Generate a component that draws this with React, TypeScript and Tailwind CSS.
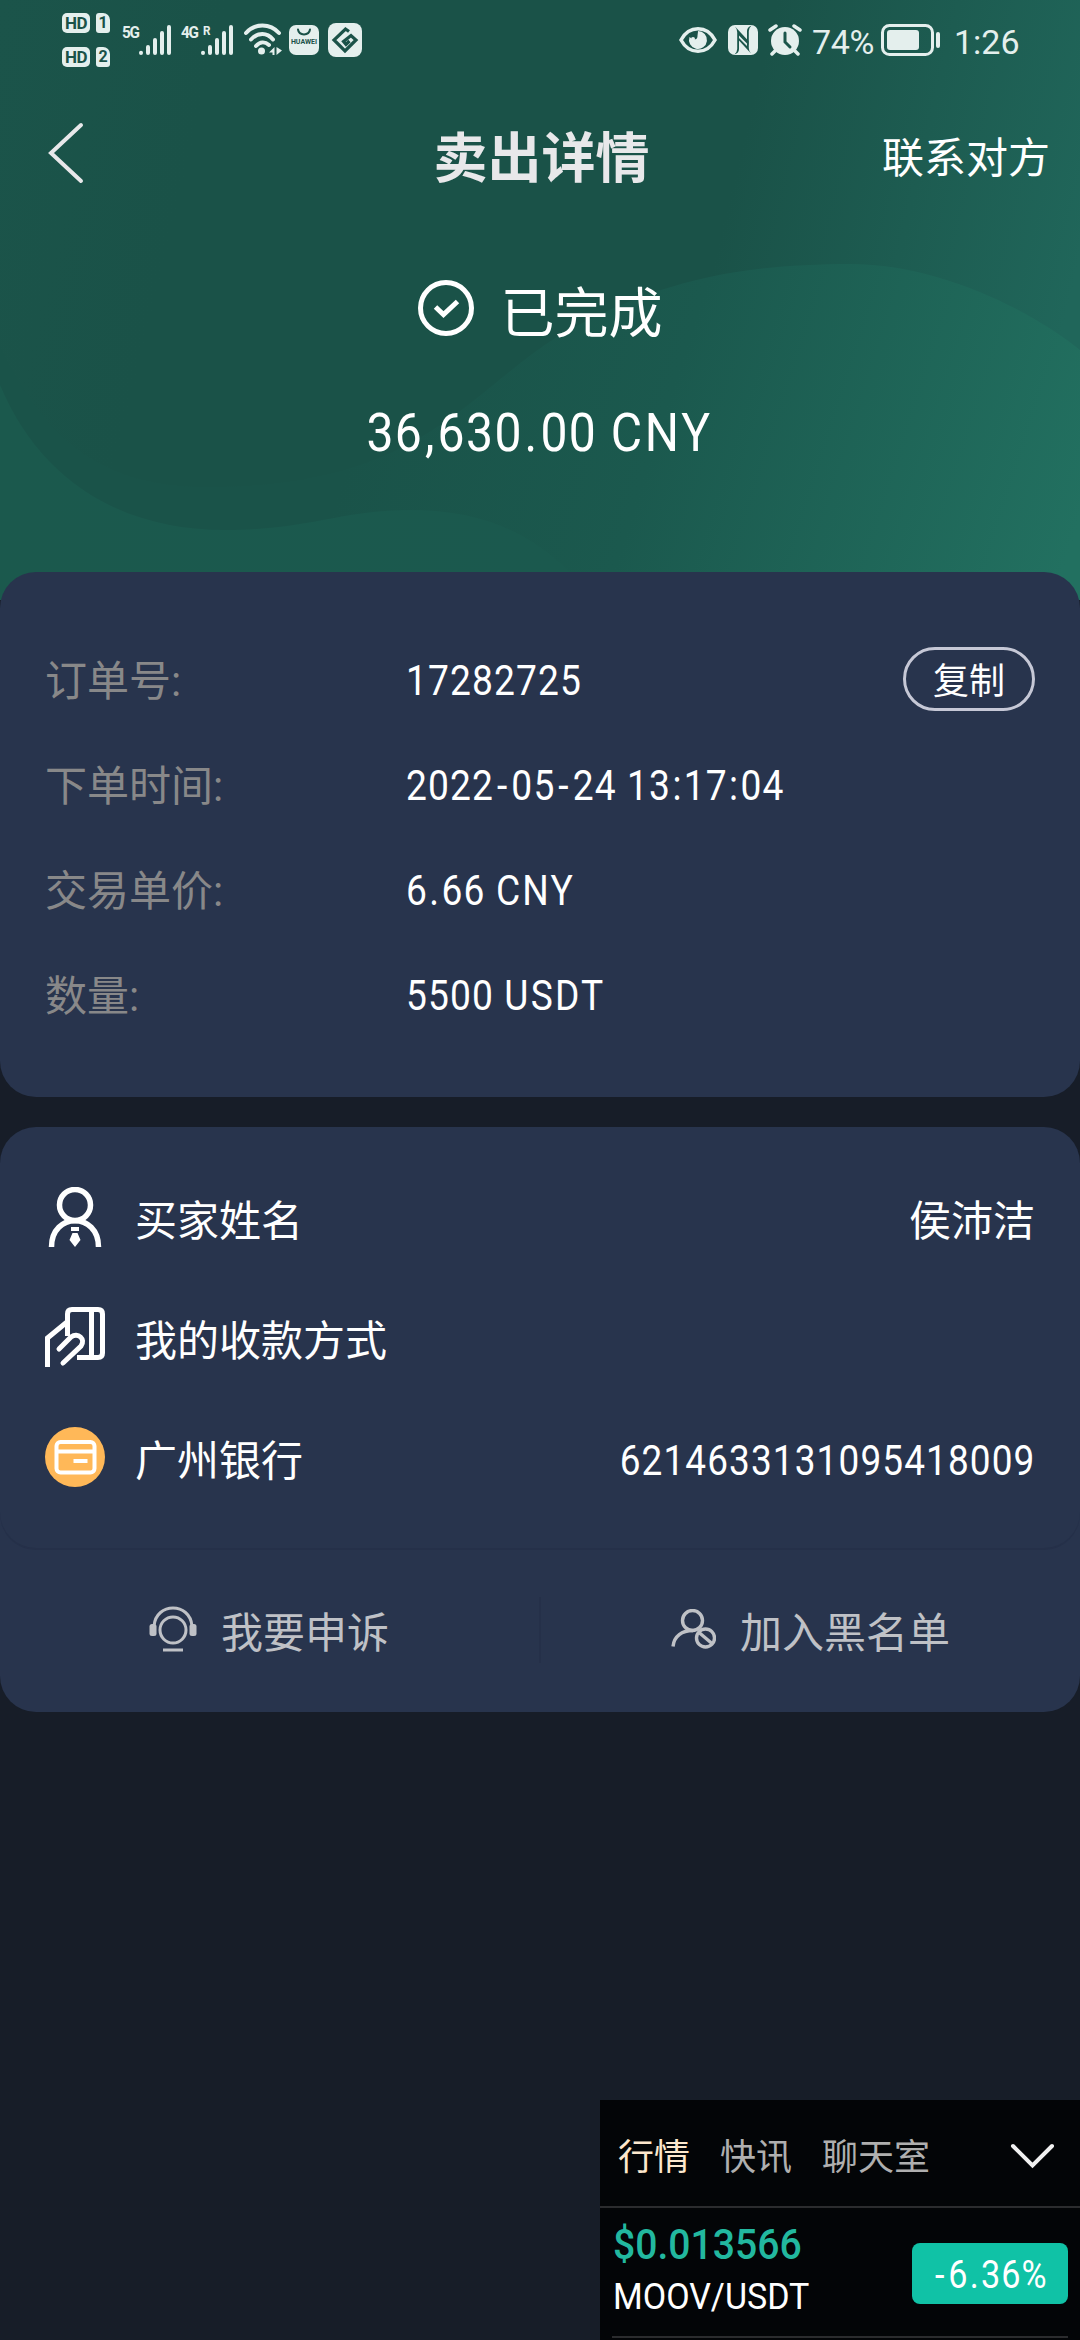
import type { ReactNode } from "react";

const orderRows = [
  { label: "订单号:", value: "17282725", copy: true },
  { label: "下单时间:", value: "2022-05-24 13:17:04" },
  { label: "交易单价:", value: "6.66 CNY" },
  { label: "数量:", value: "5500 USDT" },
];

// condensed numerals with roomier punctuation
const Num = ({ children }: { children: string }) => (
  <span className="inline-block whitespace-nowrap tracking-[0.03em]">
    {children.split(/([-:.,]|[A-Z]+)/).map((part, i) =>
      part === "-" ? (
        <span key={i} className="px-[0.08em]">{part}</span>
      ) : /^[:.,]$/.test(part) ? (
        <span key={i} className="px-[0.035em]">{part}</span>
      ) : /^[A-Z]+$/.test(part) ? (
        <span key={i} className="tracking-[0.06em]">{part}</span>
      ) : (
        part
      )
    )}
  </span>
);

const HeaderWaves = () => (
  <svg className="absolute inset-0 w-full h-full" viewBox="0 0 1080 600" preserveAspectRatio="none">
    <defs>
      <linearGradient id="base" gradientUnits="userSpaceOnUse" x1="0" y1="0" x2="1080" y2="260">
        <stop offset="0" stopColor="#1b544a" />
        <stop offset="0.2" stopColor="#1a5248" />
        <stop offset="0.68" stopColor="#1a5248" />
        <stop offset="1" stopColor="#20665a" />
      </linearGradient>
      <linearGradient id="wave" gradientUnits="userSpaceOnUse" x1="400" y1="300" x2="1080" y2="520">
        <stop offset="0" stopColor="#1a5349" />
        <stop offset="0.4" stopColor="#1b594e" />
        <stop offset="1" stopColor="#227060" />
      </linearGradient>
      <linearGradient id="low" gradientUnits="userSpaceOnUse" x1="0" y1="400" x2="600" y2="570">
        <stop offset="0" stopColor="#1b594d" />
        <stop offset="1" stopColor="#1b594e" />
      </linearGradient>
    </defs>
    <rect width="1080" height="600" fill="url(#base)" />
    <path d="M0 345C50 450 110 487 210 487C420 487 470 390 560 335C650 285 730 264 850 264C940 264 1030 310 1080 350V600H0Z" fill="url(#wave)" />
    <path d="M0 385C40 480 120 530 225 530C310 530 340 510 410 510C500 510 550 545 595 600H0Z" fill="url(#low)" />
  </svg>
);

const SimBadge = ({ n }: { n: string }) => (
  <div className="flex gap-[6px]">
    <div className="w-[28px] h-[20px] rounded-[5px] bg-[#e4efed] text-[#1a5248] text-[17px] leading-[20px] font-bold text-center tracking-tight">HD</div>
    <div className="w-[14px] h-[20px] rounded-[3px] rounded-tr-[7px] bg-[#e4efed] text-[#1a5248] text-[16px] leading-[20px] font-bold text-center">{n}</div>
  </div>
);

const SignalBars = () => (
  <svg className="w-[34px] h-[32px]" viewBox="0 0 34 32" stroke="#e4efed" strokeWidth="4" strokeLinecap="round">
    <path d="M3 28.8V29M10 23V29M17 16V29M24 9V29M31 3V29" />
  </svg>
);

const StatusBar = () => (
  <div className="relative flex items-center h-[80px] text-[#e4efed]">
    <div className="ml-[62px] flex flex-col gap-[14px]">
      <SimBadge n="1" />
      <SimBadge n="2" />
    </div>
    <div className="ml-[12px] flex">
      <span className="w-[16px] text-[17px] leading-[16px] font-bold tracking-[-1.5px] origin-left scale-x-90">5G</span>
      <SignalBars />
    </div>
    <div className="ml-[9px] flex">
      <span className="w-[19px] text-[17px] leading-[16px] font-bold tracking-[-1.5px] origin-left scale-x-90">4G</span>
      <div className="relative">
        <SignalBars />
        <span className="absolute left-[3px] top-0 text-[13px] leading-[14px] font-bold origin-left scale-x-90">R</span>
      </div>
    </div>
    <svg className="ml-[9px] w-[40px] h-[34px]" viewBox="0 0 40 34" fill="none" stroke="#e4efed" strokeWidth="4" strokeLinecap="round">
      <path d="M3 10C12 0 27 0 36 10M8 16.500C15 9 24 9 30 16.500M13 23C17 18.500 22 18.500 26 22" />
      <circle cx="18.500" cy="28" r="3.500" fill="#e4efed" stroke="none" />
      <path d="M31.500 24V32H29.500V29.500H26ZM33.500 24V32L39 27.500Z" fill="#e4efed" stroke="none" />
    </svg>
    <div className="ml-[6px] relative w-[30px] h-[30px] rounded-[7px] bg-[#e4efed]">
      <svg className="absolute inset-0" viewBox="0 0 30 30" fill="none" stroke="#1a5248" strokeWidth="2" strokeLinecap="round">
        <path d="M9 4.500C10 11 20 11 21 4.500" />
      </svg>
      <span className="absolute inset-x-0 top-[13px] text-center text-[7px] leading-[9px] font-bold text-[#1a5248]">HUAWEI</span>
    </div>
    <svg className="ml-[9px] w-[34px] h-[34px]" viewBox="0 0 34 34" fill="none">
      <rect width="34" height="34" rx="8" fill="#e4efed" />
      <path d="M21 8.500L17.500 6L6 17L17 28L28 17L23 12.500L15.500 18.500L18 21.500L21.500 18" stroke="#1a5248" strokeWidth="3.200" />
    </svg>

    <div className="ml-auto mr-[62px] flex items-center">
      <svg className="w-[38px] h-[28px]" viewBox="0 0 38 28">
        <path d="M2 14C10 -1 28 -1 36 14C28 29 10 29 2 14Z" fill="none" stroke="#e4efed" strokeWidth="3.500" />
        <path d="M19 5A9 9 0 1 1 10.500 11C13 13.500 19 13.500 19 5Z" fill="#e4efed" />
        <circle cx="15" cy="10" r="3.500" fill="#1a5248" />
        <circle cx="14" cy="13" r="2" fill="#e4efed" />
      </svg>
      <svg className="ml-[11px] w-[30px] h-[30px]" viewBox="0 0 30 30">
        <rect width="30" height="30" rx="7" fill="#e4efed" />
        <g fill="#1b564b">
          <path d="M7 1.500L20.500 16V20L11 10.500V24Q11 28 6.500 29.500Q9.200 27 9.200 24V7Q9.200 4 7 1.500Z" />
          <path d="M23 28.500L10.500 15V12.500L12.500 14.500L19 21V6Q19 2 23.500 0.500Q20.800 3 20.800 6V23Q20.800 26 23 28.500Z" />
        </g>
      </svg>
      <svg className="ml-[10px] w-[34px] h-[32px]" viewBox="0 0 34 32">
        <circle cx="17" cy="17" r="14" fill="#e4efed" />
        <path d="M2 6L8 2M32 6L26 2M7 27L4 30M27 27L30 30" stroke="#e4efed" strokeWidth="3.500" strokeLinecap="round" />
        <path d="M17 9V18L22 23" fill="none" stroke="#1b564b" strokeWidth="3" strokeLinecap="round" />
      </svg>
      <span className="ml-[10px] w-[63px] text-[34px] leading-[40px] tracking-[-0.4px] pt-[3px]">74%</span>
      <svg className="ml-[6px] w-[60px] h-[32px]" viewBox="0 0 60 32">
        <rect x="1.500" y="1.500" width="50" height="29" rx="7" fill="none" stroke="#e4efed" strokeWidth="3" />
        <rect x="6" y="6" width="32" height="20" rx="3" fill="#e4efed" />
        <rect x="55" y="8" width="4" height="16" rx="2" fill="#e4efed" />
      </svg>
      <span className="ml-[13px] w-[64px] text-[34px] leading-[40px] pt-[3px]">1:26</span>
    </div>
  </div>
);

const BuyerIcon = () => (
  <svg className="w-[60px] h-[60px]" viewBox="0 0 60 60" fill="none" stroke="#fff" strokeWidth="5.500">
    <circle cx="30" cy="18" r="15.500" />
    <path d="M6.500 60C6.500 25 53.500 25 53.500 60" />
    <path d="M26 40H34V44H26ZM27.500 46H32.500L35.500 53L30 60L24.500 53Z" fill="#fff" stroke="none" />
  </svg>
);

const HandCardIcon = () => (
  <svg className="w-[60px] h-[60px]" viewBox="0 0 60 60" fill="none" stroke="#fff" strokeWidth="5">
    <path d="M22.500 29V7Q22.500 2.500 27 2.500H53Q57.500 2.500 57.500 7V46Q57.500 50.500 53 50.500H32M46.500 2.500V50.500" />
    <path d="M2.500 60V31L22 15" />
    <path d="M14 42L26 30C33 25 41 32 36 39L18 56" strokeLinecap="round" />
  </svg>
);

const BankIcon = () => (
  <svg className="w-[60px] h-[60px]" viewBox="0 0 60 60" fill="none" stroke="#fff" strokeWidth="4">
    <circle cx="30" cy="30" r="30" fill="#ffb858" stroke="none" />
    <rect x="11.500" y="15" width="38" height="30.500" rx="4" />
    <path d="M11.500 24.500H49.500M28.500 34H42.500" />
  </svg>
);

const HeadsetIcon = () => (
  <svg className="w-[48px] h-[48px]" viewBox="0 0 48 48" fill="none" stroke="#bfc1c6" strokeWidth="3">
    <path d="M5 20C7 -4 41 -4 43 20" />
    <circle cx="24" cy="24" r="13" />
    <rect x="0.500" y="18" width="7" height="12" rx="2.500" fill="#bfc1c6" stroke="none" />
    <rect x="40.500" y="18" width="7" height="12" rx="2.500" fill="#bfc1c6" stroke="none" />
    <path d="M14 44H34" />
  </svg>
);

const BlockUserIcon = () => (
  <svg className="w-[45px] h-[42px]" viewBox="0 0 45 42" fill="none" stroke="#bfc1c6" strokeWidth="3.400">
    <circle cx="21.500" cy="11.500" r="10" />
    <path d="M2 37.500C3 27 11 21.500 22 21.500" />
    <circle cx="34.500" cy="29" r="9" />
    <path d="M28 23.500L41 34.500" />
  </svg>
);

const PayRow = ({ icon, label, value }: { icon: ReactNode; label: string; value?: ReactNode }) => (
  <div className="flex items-center h-[120px]">
    {icon}
    <span className="ml-[30px] mt-[9px]">{label}</span>
    <span className="ml-auto mt-[9px]">{value}</span>
  </div>
);

export default function App() {
  return (
    <div className="relative w-[1080px] h-[2340px] overflow-hidden bg-[#171d28] text-white text-[42px] leading-[60px] font-['Roboto','Noto_Sans_CJK_SC',sans-serif]">
      <header className="relative h-[600px]">
        <HeaderWaves />
        <StatusBar />
        <div className="relative flex items-center justify-between h-[154px] pl-[48px] pr-[30px]">
          <svg className="w-[153px] h-[62px] mb-[8px]" viewBox="0 0 153 62" fill="none" stroke="#e8e8ea" strokeWidth="4">
            <path d="M33 3L3 31L33 59" strokeLinecap="round" />
          </svg>
          <h1 className="mt-[6px] text-[54px] font-bold text-[#e8e8ea]">卖出详情</h1>
          <span className="w-[168px] mt-[3px]">联系对方</span>
        </div>
        <div className="relative flex justify-center mt-[47px] text-[54px] leading-[64px]">
          <svg className="w-[56px] h-[56px] mr-[27px] -mt-px" viewBox="0 0 56 56" fill="none" stroke="#fff">
            <circle cx="28" cy="28" r="25.500" strokeWidth="5" />
            <path d="M17.500 27L25.500 34.500L39.500 21.500" strokeWidth="5" />
          </svg>
          <span className="pt-[2px]">已完成</span>
        </div>
        <div className="relative flex justify-center mt-[54px] text-[54px] leading-[64px]">
          <div className="scale-x-[0.89]"><Num>36,630.00 CNY</Num></div>
        </div>
      </header>

      <section className="relative -mt-[28px] h-[525px] rounded-[36px] bg-[#28344d] pt-[56px] px-[45px]">
        {orderRows.map((row) => (
          <div key={row.label} className="flex items-center h-[105px]">
            <span className="w-[361px] mt-[3px] text-[#888889]">{row.label}</span>
            <div className="origin-left scale-x-[0.885]"><Num>{row.value}</Num></div>
            {row.copy && (
              <button className="ml-auto w-[132px] h-[64px] -mt-[3px] rounded-full border-[3px] border-[#c6c8d6] text-[36px] leading-[64px]">复制</button>
            )}
          </div>
        ))}
      </section>

      <section className="mt-[30px] h-[585px] rounded-[36px] bg-[#28344d]">
        <div className="h-[421px] rounded-[36px] shadow-[0_2px_0_#253049] px-[45px] pt-[30px]">
          <PayRow icon={<BuyerIcon />} label="买家姓名" value="侯沛洁" />
          <PayRow icon={<HandCardIcon />} label="我的收款方式" />
          <PayRow
            icon={<BankIcon />}
            label="广州银行"
            value={<div className="origin-right scale-x-[0.88] -mt-[2px]"><Num>6214633131095418009</Num></div>}
          />
        </div>
        <div className="flex items-center h-[164px] text-[#bfc1c6]">
          <div className="flex items-center w-[539px] pl-[149px]">
            <HeadsetIcon />
            <span className="ml-[24px] mt-[8px]">我要申诉</span>
          </div>
          <div className="w-[2px] h-[66px] bg-[#253049]" />
          <div className="flex items-center pl-[130px]">
            <BlockUserIcon />
            <span className="ml-[24px] mt-[8px]">加入黑名单</span>
          </div>
        </div>
      </section>

      {/* floating market widget */}
      <aside className="absolute left-[600px] top-[2100px] w-[480px] h-[240px] bg-[#030507]">
        <div className="flex items-center h-[108px] pl-[18px] pr-[25px] border-b-2 border-[#2b2c2e] text-[36px] text-[#afafaf]">
          <span className="mr-[30px] mt-[9px] text-[#fde8cd]">行情</span>
          <span className="mr-[30px] mt-[9px]">快讯</span>
          <span className="mt-[9px]">聊天室</span>
          <svg className="ml-auto mt-[5px] w-[45px] h-[28px]" viewBox="0 0 45 28" fill="none" stroke="#f1f1f1" strokeWidth="4" strokeLinecap="round">
            <path d="M3 4L22.500 23.500L42 4" />
          </svg>
        </div>
        <div className="flex items-center justify-between h-[130px] ml-[12px] mr-[12px] border-b-2 border-[#2b2c2e]">
          <div className="ml-px">
            <div className="origin-left scale-x-[0.91] -mt-[4px] text-[43px] leading-[54px] font-medium text-[#22b89f]">$0.013566</div>
            <div className="origin-left scale-x-[0.92] text-[37px] leading-[52px]">MOOV/USDT</div>
          </div>
          <div className="w-[156px] h-[61px] mt-[2px] rounded-[8px] bg-[#10c2a6] text-center text-[38px] leading-[65px]">
            <div className="scale-x-[0.9]"><Num>-6.36%</Num></div>
          </div>
        </div>
      </aside>
    </div>
  );
}
